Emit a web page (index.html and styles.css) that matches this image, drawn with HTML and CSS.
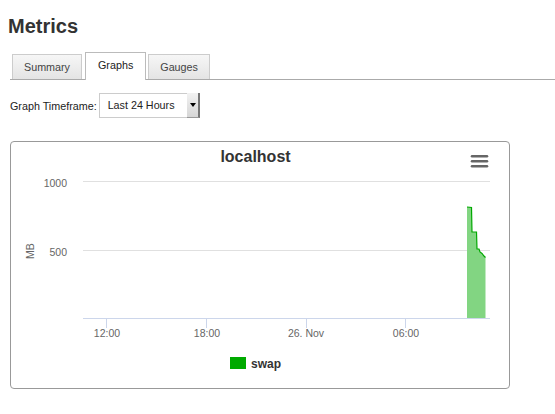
FILE: index.html
```html
<!DOCTYPE html>
<html>
<head>
<meta charset="utf-8">
<title>Metrics</title>
<link rel="stylesheet" href="styles.css">
</head>
<body>
<h1 class="title">Metrics</h1>
<div class="tabs">
  <div class="tab">Summary</div>
  <div class="tab active">Graphs</div>
  <div class="tab">Gauges</div>
</div>
<div class="timeframe">
  <span class="timeframe-label">Graph Timeframe:</span>
  <div class="select">
    <span class="select-value">Last 24 Hours</span>
    <span class="select-btn"><span class="caret"></span></span>
  </div>
</div>
<div class="chart">
  <svg class="chart-svg" width="498" height="246" viewBox="11 142 498 246" xmlns="http://www.w3.org/2000/svg">
    <text class="chart-title" x="255.5" y="162" text-anchor="middle">localhost</text>
    <g class="menu-icon">
      <line x1="472" y1="156.3" x2="487" y2="156.3"/>
      <line x1="472" y1="161.3" x2="487" y2="161.3"/>
      <line x1="472" y1="166.3" x2="487" y2="166.3"/>
    </g>
    <line class="grid" x1="83" y1="181.5" x2="490" y2="181.5"/>
    <line class="grid" x1="83" y1="250.5" x2="490" y2="250.5"/>
    <text class="ylabel" x="67" y="186.5" text-anchor="end">1000</text>
    <text class="ylabel" x="67" y="255.5" text-anchor="end">500</text>
    <text class="ytitle" transform="translate(33.5,251) rotate(-90)" text-anchor="middle">MB</text>
    <path class="area" d="M467,207 L471.5,207.5 L472,232 L476.5,232 L477,249 L479,249 L480,252 L482,253.5 L484,256 L485.5,257.5 L485.5,318.5 L467,318.5 Z"/>
    <path class="series" d="M467,207 L471.5,207.5 L472,232 L476.5,232 L477,249 L479,249 L480,252 L482,253.5 L484,256 L485.5,257.5"/>
    <line class="axis" x1="83" y1="318.5" x2="490" y2="318.5"/>
    <line class="tick" x1="106.5" y1="318.5" x2="106.5" y2="328"/>
    <line class="tick" x1="206.5" y1="318.5" x2="206.5" y2="328"/>
    <line class="tick" x1="306.5" y1="318.5" x2="306.5" y2="328"/>
    <line class="tick" x1="405.5" y1="318.5" x2="405.5" y2="328"/>
    <text class="xlabel" x="107" y="337" text-anchor="middle">12:00</text>
    <text class="xlabel" x="207" y="337" text-anchor="middle">18:00</text>
    <text class="xlabel" x="306" y="337" text-anchor="middle">26. Nov</text>
    <text class="xlabel" x="406" y="337" text-anchor="middle">06:00</text>
    <rect class="legend-swatch" x="230" y="357" width="16" height="12"/>
    <text class="legend-text" x="251" y="368">swap</text>
  </svg>
</div>
</body>
</html>
```
FILE: styles.css
```css
body {
  margin: 0;
  padding: 0 0 0 8px;
  font-family: "Liberation Sans", Arial, sans-serif;
  color: #222;
  background: #fff;
}

.title {
  margin: 14px 0 0;
  font-size: 20px;
  line-height: 24px;
  font-weight: bold;
  color: #333;
}

.tabs {
  display: flex;
  align-items: flex-end;
  height: 27px;
  margin: 14px 0 0 2px;
  padding-left: 2px;
  border-bottom: 1px solid #aaa;
}

.tab {
  box-sizing: border-box;
  height: 25px;
  padding: 0 11px;
  border: 1px solid #ccc;
  border-bottom: none;
  background: linear-gradient(#f6f6f6, #e4e4e4);
  font-size: 10.75px;
  line-height: 24px;
  color: #444;
  margin-right: 2px;
}

.tab:first-child {
  margin-right: 3px;
}

.tab.active {
  height: 28px;
  margin-bottom: -1px;
  background: #fff;
  border-color: #bbb;
  color: #222;
  line-height: 25px;
  padding: 0 12px;
}

.timeframe {
  display: flex;
  align-items: center;
  gap: 2px;
  margin: 13px 0 0 2px;
  font-size: 10.75px;
  color: #222;
}

.select {
  box-sizing: border-box;
  display: flex;
  width: 101px;
  height: 25px;
  border: 1px solid #ccc;
  background: #fff;
}

.select-value {
  flex: 1;
  padding-left: 8px;
  line-height: 23px;
}

.select-btn {
  box-sizing: border-box;
  width: 13px;
  display: flex;
  align-items: center;
  justify-content: center;
  background: linear-gradient(#f2f2f2, #d6d6d6);
  border-right: 2px solid #777;
  border-bottom: 1px solid #999;
  margin: -1px -1px -1px 0;
}

.caret {
  width: 0;
  height: 0;
  border-left: 3px solid transparent;
  border-right: 3px solid transparent;
  border-top: 4px solid #000;
  margin-left: 1px;
}

.chart {
  box-sizing: border-box;
  width: 500px;
  height: 248px;
  margin: 23px 0 0 2px;
  border: 1px solid #999;
  border-radius: 4px;
  overflow: hidden;
}

.chart-svg {
  display: block;
  font-family: "Liberation Sans", Arial, sans-serif;
}

.chart-title {
  font-size: 16px;
  font-weight: bold;
  fill: #333;
}

.menu-icon line {
  stroke: #666;
  stroke-width: 2.5;
  stroke-linecap: round;
}

.grid {
  stroke: #e0e0e0;
  stroke-width: 1;
}

.axis,
.tick {
  stroke: #ccd6eb;
  stroke-width: 1;
}

.ylabel,
.xlabel,
.ytitle {
  font-size: 10.5px;
  fill: #666;
}

.area {
  fill: #82d582;
  stroke: none;
}

.series {
  fill: none;
  stroke: #00a800;
  stroke-width: 1.2;
}

.legend-swatch {
  fill: #00aa00;
}

.legend-text {
  font-size: 12px;
  font-weight: bold;
  fill: #333;
}
```
